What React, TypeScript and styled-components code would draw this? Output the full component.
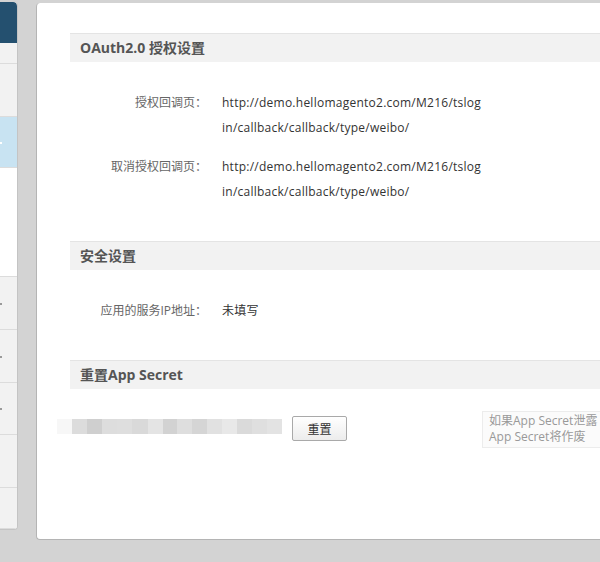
import React from 'react';
import styled, { createGlobalStyle } from 'styled-components';

const GlobalStyle = createGlobalStyle`
  html, body {
    margin: 0;
    padding: 0;
    background: #d3d3d3;
    overflow: hidden;
  }
  body {
    font-family: "Open Sans", "Noto Sans CJK SC", sans-serif;
    font-size: 12px;
  }
`;

const Page = styled.div`
  display: flex;
  flex-flow: row nowrap;
  align-items: flex-start;
  gap: 18px;
  width: 760px;
  height: 562px;
`;

const Sidebar = styled.div`
  display: flex;
  flex-flow: column nowrap;
  width: 17px;
  height: 527px;
  margin-top: 2px;
  background: #f2f2f2;
  border-right: 1px solid #c4c4c4;
  border-bottom: 1px solid #c4c4c4;
  border-radius: 0 4px 4px 0;
  overflow: hidden;
`;

const SideTop = styled.div`
  height: 41px;
  background: #24506f;
  border-radius: 0 4px 0 0;
`;

const SideItem = styled.div<{ $h: number; $bg?: string; $arrow?: boolean }>`
  position: relative;
  height: ${(p) => p.$h}px;
  background: ${(p) => p.$bg || '#f2f2f2'};
  border-bottom: 1px solid #dcdcdc;
  &::after {
    content: '';
    display: ${(p) => (p.$arrow ? 'block' : 'none')};
    position: absolute;
    left: 0;
    top: 50%;
    width: 2px;
    height: 2px;
    background: ${(p) => (p.$bg === '#c8e3f2' ? '#ffffff' : '#9a9a9a')};
  }
`;

const Panel = styled.div`
  flex: none;
  width: 700px;
  height: 537px;
  margin-top: 3px;
  padding: 30px 0 0 33px;
  box-sizing: border-box;
  background: #ffffff;
  border-left: 1px solid #b4b4b4;
  border-bottom: 1px solid #b4b4b4;
  border-radius: 4px 0 0 4px;
`;

const SectionHeader = styled.div`
  height: 28px;
  line-height: 28px;
  padding-left: 10px;
  background: #f2f2f2;
  border-top: 1px solid #e4e4e4;
  color: #555555;
  font-size: 14px;
  font-weight: bold;
`;

const Rows = styled.div`
  display: flex;
  flex-flow: column nowrap;
  gap: 14px;
  padding: 28px 0 37px;
`;

const Row = styled.div`
  display: flex;
  flex-flow: row nowrap;
  line-height: 25px;
`;

const Label = styled.div`
  width: 137px;
  text-align: right;
  color: #666666;
  white-space: nowrap;
`;

const Value = styled.div`
  margin-left: 15px;
  color: #333333;
  letter-spacing: 0.25px;
`;

const Line = styled.span`
  display: block;
`;

const ResetRow = styled.div`
  display: flex;
  flex-flow: row nowrap;
  align-items: flex-start;
  margin-left: -13px;
  padding-top: 22px;
`;

const Mosaic = styled.div`
  display: flex;
  flex-flow: row nowrap;
  height: 15px;
  margin-top: 8px;
`;

const Tile = styled.div<{ $w: number }>`
  width: ${(p) => p.$w}px;
  height: 100%;
`;

const ResetButton = styled.button`
  width: 55px;
  height: 25px;
  margin: 5px 0 0 10px;
  padding: 0;
  font-family: inherit;
  font-size: 12px;
  color: #333333;
  background: linear-gradient(#ffffff, #ececec);
  border: 1px solid #a9a9a9;
  border-radius: 2px;
`;

const Hint = styled.div`
  margin-left: 135px;
  padding: 1px 0 2px 6px;
  width: 130px;
  line-height: 16px;
  color: #999999;
  background: #fbfbfb;
  border: 1px solid #ececec;
  white-space: nowrap;
  overflow: hidden;
`;

const sideItems = [
  { h: 20 },
  { h: 52 },
  { h: 51, bg: '#c8e3f2', arrow: true },
  { h: 108, bg: '#ffffff' },
  { h: 52, arrow: true },
  { h: 52, arrow: true },
  { h: 52, arrow: true },
  { h: 52 },
  { h: 40 },
];

const mosaic = [
  ['#f7f7f7', 15], ['#dcdcdc', 15], ['#cfcfcf', 15], ['#dddddd', 15],
  ['#dedede', 15], ['#d9d9d9', 16], ['#e4e4e4', 15], ['#d2d2d2', 14],
  ['#dedede', 15], ['#d5d5d5', 15], ['#e1e1e1', 15], ['#e8e8e8', 15],
  ['#dadada', 15], ['#dfdfdf', 15], ['#e3e3e3', 15],
] as [string, number][];

const App: React.FC = () => {
  return (
    <>
      <GlobalStyle />
      <Page>
        <Sidebar>
          <SideTop />
          {sideItems.map((s, i) => (
            <SideItem key={i} $h={s.h} $bg={s.bg} $arrow={s.arrow} />
          ))}
        </Sidebar>
        <Panel>
          <SectionHeader>OAuth2.0 授权设置</SectionHeader>
          <Rows>
            <Row>
              <Label>授权回调页：</Label>
              <Value>
                <Line>http://demo.hellomagento2.com/M216/tslog</Line>
                <Line>in/callback/callback/type/weibo/</Line>
              </Value>
            </Row>
            <Row>
              <Label>取消授权回调页：</Label>
              <Value>
                <Line>http://demo.hellomagento2.com/M216/tslog</Line>
                <Line>in/callback/callback/type/weibo/</Line>
              </Value>
            </Row>
          </Rows>
          <SectionHeader>安全设置</SectionHeader>
          <Rows>
            <Row>
              <Label>应用的服务IP地址：</Label>
              <Value>未填写</Value>
            </Row>
          </Rows>
          <SectionHeader>重置App Secret</SectionHeader>
          <ResetRow>
            <Mosaic>
              {mosaic.map(([c, w], i) => (
                <Tile key={i} $w={w} style={{ background: c }} />
              ))}
            </Mosaic>
            <ResetButton>重置</ResetButton>
            <Hint>
              如果App Secret泄露
              <br />
              App Secret将作废
            </Hint>
          </ResetRow>
        </Panel>
      </Page>
    </>
  );
};

export default App;
